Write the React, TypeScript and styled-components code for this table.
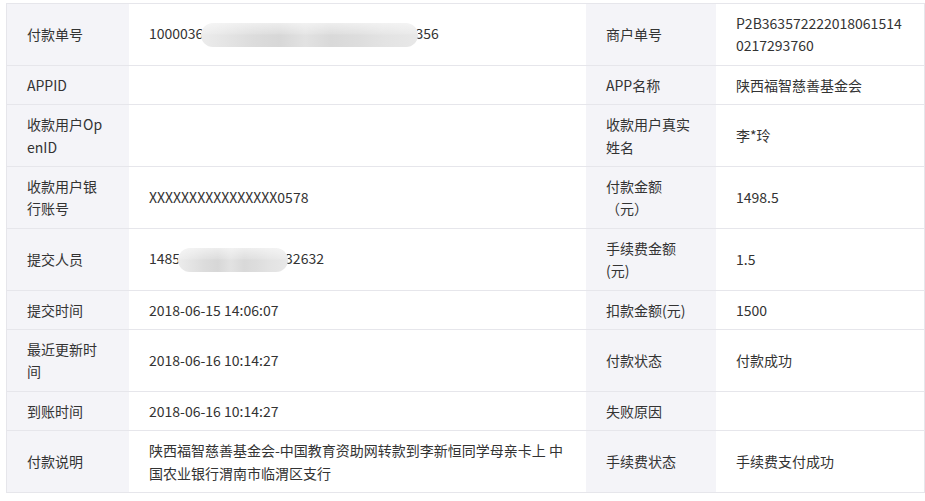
import * as React from 'react';
import styled, { createGlobalStyle } from 'styled-components';

const GlobalStyle = createGlobalStyle`
  html, body {
    margin: 0;
    padding: 0;
    background: #ffffff;
  }
  body {
    font-family: "Noto Sans CJK SC", "Noto Sans", sans-serif;
    font-size: 14px;
    color: #333333;
  }
`;

const Page = styled.div`
  padding: 3px 0 0 6px;
`;

const Grid = styled.div`
  display: grid;
  grid-template-columns: 122px 457px 130px 1fr;
  width: 919px;
  box-sizing: border-box;
  border-top: 1px solid #e6e6eb;
  border-left: 1px solid #e6e6eb;
  border-right: 1px solid #e6e6eb;
`;

const Cell = styled.div<{ $label?: boolean }>`
  display: flex;
  align-items: center;
  box-sizing: border-box;
  padding: 8px 20px;
  min-width: 0;
  border-bottom: 1px solid #e6e6eb;
  background: ${(p) => (p.$label ? '#f4f4f8' : '#ffffff')};
`;

const Text = styled.div`
  line-height: 22.4px;
  word-break: break-all;
  min-width: 0;
`;

// blurred mosaic that hides part of a number
const Redact = styled.span<{ $w: number }>`
  position: relative;
  display: inline-block;
  width: ${(p) => p.$w}px;
  height: 24px;
  margin: 0 -3px 0 -2px;
  vertical-align: middle;
  border-radius: 12px;
  background:
    linear-gradient(180deg, rgba(255, 255, 255, 0.55) 0%, rgba(255, 255, 255, 0.15) 45%, rgba(255, 255, 255, 0) 50%),
    linear-gradient(90deg, #ececec 0%, #e4e4e4 12%, #dcdcdc 24%, #d7d7d7 36%, #e2e2e2 48%, #d9d9d9 60%, #dddddd 72%, #e3e3e3 84%, #e8e8e8 100%);
  filter: blur(0.6px);
`;

type Row = {
  k1: string;
  v1?: React.ReactNode;
  k2: string;
  v2?: React.ReactNode;
};

const rows: Row[] = [
  {
    k1: '付款单号',
    v1: (
      <>
        1000036<Redact $w={217} />356
      </>
    ),
    k2: '商户单号',
    v2: 'P2B3635722220180615140217293760',
  },
  { k1: 'APPID', k2: 'APP名称', v2: '陕西福智慈善基金会' },
  { k1: '收款用户OpenID', k2: '收款用户真实姓名', v2: '李*玲' },
  { k1: '收款用户银行账号', v1: 'XXXXXXXXXXXXXXXX0578', k2: '付款金额（元）', v2: '1498.5' },
  {
    k1: '提交人员',
    v1: (
      <>
        1485<Redact $w={110} />32632
      </>
    ),
    k2: '手续费金额(元)',
    v2: '1.5',
  },
  { k1: '提交时间', v1: '2018-06-15 14:06:07', k2: '扣款金额(元)', v2: '1500' },
  { k1: '最近更新时间', v1: '2018-06-16 10:14:27', k2: '付款状态', v2: '付款成功' },
  { k1: '到账时间', v1: '2018-06-16 10:14:27', k2: '失败原因' },
  {
    k1: '付款说明',
    v1: '陕西福智慈善基金会-中国教育资助网转款到李新恒同学母亲卡上 中国农业银行渭南市临渭区支行',
    k2: '手续费状态',
    v2: '手续费支付成功',
  },
];

export default function App() {
  return (
    <>
      <GlobalStyle />
      <Page>
        <Grid>
          {rows.map((r) => (
            <React.Fragment key={r.k1}>
              <Cell $label>
                <Text>{r.k1}</Text>
              </Cell>
              <Cell>
                <Text>{r.v1}</Text>
              </Cell>
              <Cell $label>
                <Text>{r.k2}</Text>
              </Cell>
              <Cell>
                <Text>{r.v2}</Text>
              </Cell>
            </React.Fragment>
          ))}
        </Grid>
      </Page>
    </>
  );
}
